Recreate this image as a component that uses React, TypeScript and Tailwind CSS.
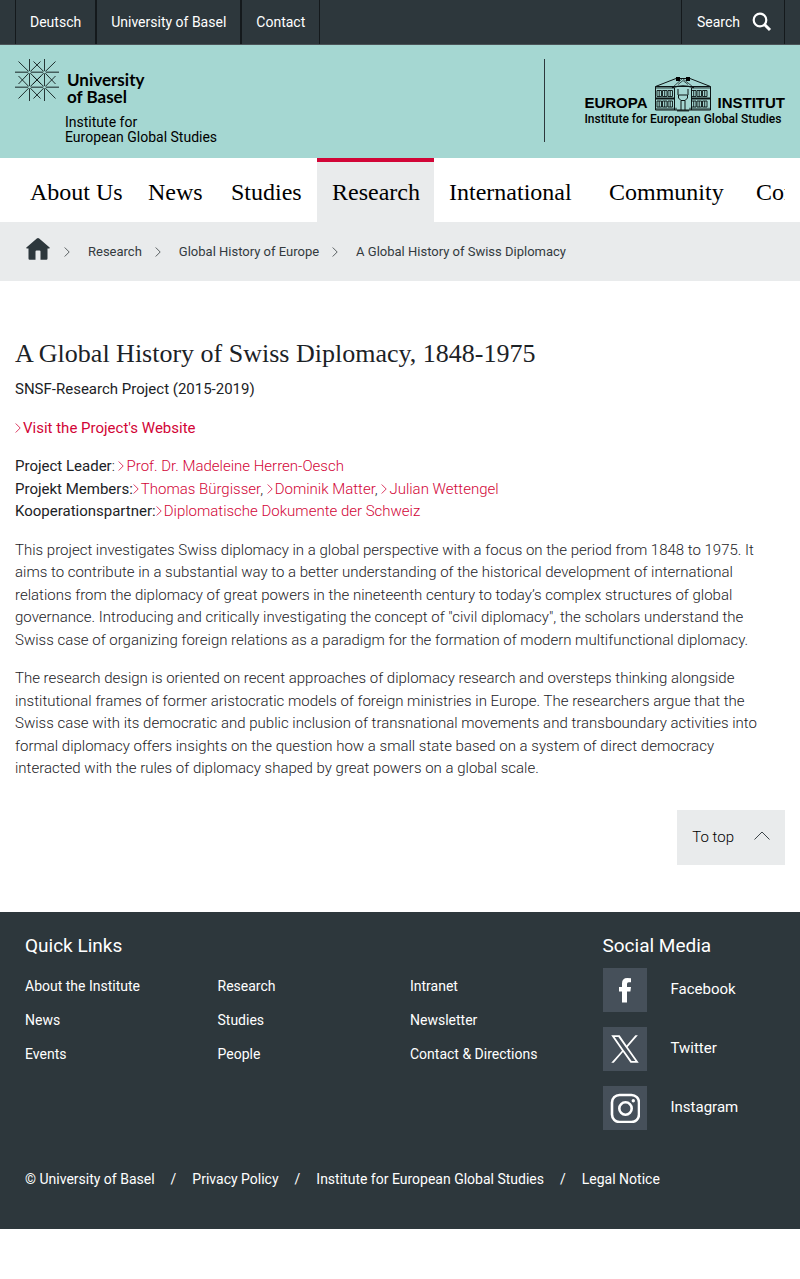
import React from 'react';

const sans = "font-['Roboto','Liberation_Sans',sans-serif]";
const serif = "font-['Liberation_Serif',serif]";

const navItems = ['About Us', 'News', 'Studies', 'Research', 'International', 'Community', 'Contact'];

const quickLinks = [
  ['About the Institute', 'News', 'Events'],
  ['Research', 'Studies', 'People'],
  ['Intranet', 'Newsletter', 'Contact & Directions'],
];

const legalLinks = ['© University of Basel', 'Privacy Policy', 'Institute for European Global Studies', 'Legal Notice'];

function Chevron({ className }: { className: string }) {
  return (
    <svg viewBox="0 0 6 10" className={className} fill="none" stroke="currentColor" aria-hidden="true">
      <path d="M.7.5 5.2 5 .7 9.5" strokeWidth="0.8" />
    </svg>
  );
}

function ContentLink({ children }: { children: string }) {
  return (
    <a href="#" className="text-[#d20537]">
      <Chevron className="mr-[2px] inline-block h-[10px] w-[6px] align-baseline" />
      {children}
    </a>
  );
}

function BaselMark() {
  return (
    <svg viewBox="0 0 44 43" className="h-[43px] w-11 shrink-0" fill="none" stroke="#101c1c" aria-hidden="true">
      <g strokeWidth="1" opacity="0.85">
        <path d="M14.5 0V42M29.5 0V42" />
        <path d="M0 13.3H44M0 28.3H44" strokeWidth="1.4" opacity="0.75" />
      </g>
      <g strokeWidth="0.9">
        <path d="M3.5 2.5 14.5 13.3 26 25M40.5 2.5 29.5 13.3 18 25M3.5 39.5 14.5 28.3 26 17M40.5 39.5 29.5 28.3 18 17" />
        <path d="M14.5 13.3 25.5 2.5M29.5 13.3 18.5 2.5M14.5 28.3 25.5 39.5M29.5 28.3 18.5 39.5" />
        <path d="M14.5 13.3 3.5 25M14.5 28.3 3.5 17M29.5 13.3 40.5 25M29.5 28.3 40.5 17" />
      </g>
      <g fill="#a5d7d2" stroke="none">
        <circle cx="14.5" cy="13.3" r="1.3" />
        <circle cx="29.5" cy="13.3" r="1.3" />
        <circle cx="14.5" cy="28.3" r="1.3" />
        <circle cx="29.5" cy="28.3" r="1.3" />
      </g>
    </svg>
  );
}

function Villa() {
  const windows = [2, 7.5, 13, 36.5, 42, 47.5];
  return (
    <svg viewBox="0 0 56 35" className="h-[35px] w-14 shrink-0" fill="none" stroke="#0c1515" strokeWidth="1" aria-hidden="true">
      <path d="M.5 9.5 21 1.5h14L55.5 9.5" />
      <rect x="21" y="0" width="4" height="4" fill="#000" stroke="none" />
      <rect x="31" y="0" width="4" height="4" fill="#000" stroke="none" />
      <path d="M18 10 27.5 1.5 38 10M23 7.5l5-4 5 4" strokeWidth="0.7" />
      <path d="M17 10.5q11-3 22 0" strokeWidth="1.4" />
      <path d="M.5 9.5h55v23.5h-55z" />
      <path d="M1 10.8h18M37 10.8h18" strokeWidth="2" opacity="0.5" />
      <path d="M1 21.5h18M37 21.5h18" strokeWidth="1.8" />
      <path d="M1 31.8h21M34 31.8h21" strokeWidth="2" opacity="0.5" />
      <g strokeWidth="0.9">
        {windows.map((x) => (
          <g key={x}>
            <path d={`M${x} 13.5h4.5v6h-4.5zM${x + 2.2} 13.5v6`} />
            <path d={`M${x} 24h4.5v6h-4.5zM${x + 2.2} 24v6`} />
          </g>
        ))}
      </g>
      <path d="M19.5 11v22M36.5 11v22M23 12v6M33 12v6" />
      <path d="M23.5 18h9v3l-2.5 2.5h-4L23.5 21zM26 23.5V33M30 23.5V33" fill="#a5d7d2" />
      <path d="M22 33.8h12" strokeWidth="1.2" />
    </svg>
  );
}

function SocialLink({ label, children }: { label: string; children: React.ReactNode }) {
  return (
    <li>
      <a href="#" className="flex items-center gap-6 text-[15px]">
        <span className="flex size-11 items-center justify-center bg-[#46505a]">{children}</span>
        {label}
      </a>
    </li>
  );
}

export default function App() {
  return (
    <div className={`${sans} bg-white text-[#1c2226]`}>
      <div className="border-b border-[#4b5458] bg-[#2d373c] px-[15px] text-sm text-white">
        <div className="flex h-11 justify-between">
          <nav aria-label="Service" className="flex border-l border-[#14191c]">
            {['Deutsch', 'University of Basel', 'Contact'].map((t, i) => (
              <a key={t} href="#" className={`flex items-center border-[#14191c] px-[14px] ${i < 2 ? 'border-r-2' : 'border-r'}`}>
                {t}
              </a>
            ))}
          </nav>
          <button className="flex items-center gap-3 border-x border-[#14191c] pr-3 pl-[15px]">
            Search
            <svg viewBox="0 0 20 20" className="size-5" fill="none" stroke="#fff" aria-hidden="true">
              <circle cx="8" cy="8" r="6.3" strokeWidth="2.2" />
              <path d="m12.5 12.5 5.5 5.5" strokeWidth="3" />
            </svg>
          </button>
        </div>
      </div>

      <header className="flex h-[113px] items-start justify-between bg-[#a5d7d2] px-[15px] pt-[14px] text-black">
        <a href="#" className="block">
          <span className="flex gap-2">
            <BaselMark />
            <span className="pt-3 font-['Lato',sans-serif] text-[17px] leading-[17px] font-bold">
              University
              <br />
              of Basel
            </span>
          </span>
          <span className="mt-[10px] block pl-[50px] text-sm leading-[15px]">
            Institute for
            <br />
            European Global Studies
          </span>
        </a>
        <a href="#" className="block border-l border-[#2d373c] pt-[18px] pb-[15px] pl-[39px]">
          <span className="flex items-end justify-between gap-[7px] font-['Liberation_Sans',sans-serif] text-[15px] leading-[18px] font-bold">
            EUROPA
            <Villa />
            INSTITUT
          </span>
          <span className="block text-xs leading-[15px] font-medium">Institute for European Global Studies</span>
        </a>
      </header>

      <nav aria-label="Main" className="px-[15px]">
        <ul className={`${serif} grid grid-cols-[118px_83px_101px_117px_160px_147px_auto] overflow-hidden text-2xl text-black`}>
          {navItems.map((t) => (
            <li key={t}>
              <a
                href="#"
                className={`flex h-16 items-center border-t-4 px-[15px] whitespace-nowrap ${
                  t === 'Research' ? 'border-[#d20537] bg-[#e9ebec]' : 'border-transparent'
                }`}
              >
                {t}
              </a>
            </li>
          ))}
        </ul>
      </nav>

      <nav aria-label="Breadcrumb" className="flex h-[59px] items-center bg-[#e9ebec] px-[26px] text-[13px] text-[#333a3e]">
        <a href="#" aria-label="Home" className="mr-[14px] pb-[6px]">
          <svg viewBox="0 0 24 22" className="h-[22px] w-6" fill="#2d373c" aria-hidden="true">
            <path d="M10.8.5q1.2-1 2.4 0L23.6 9.6q.6.9-.5.9H21.5V20.5q0 1.2-1.2 1.2H14.5V13.5q0-1-1-1h-3q-1 0-1 1V21.7H3.7q-1.2 0-1.2-1.2V10.5H.9q-1.1 0-.5-.9Z" />
          </svg>
        </a>
        {['Research', 'Global History of Europe', 'A Global History of Swiss Diplomacy'].map((t) => (
          <React.Fragment key={t}>
            <Chevron className="h-[10px] w-[6px]" />
            <a href="#" className="mr-[13px] ml-[18px]">
              {t}
            </a>
          </React.Fragment>
        ))}
      </nav>

      <main className="px-[15px] pt-[57px] pb-[47px]">
        <h1 className={`${serif} mb-2 text-[26px] leading-8`}>A Global History of Swiss Diplomacy, 1848-1975</h1>
        <div className="space-y-4 pr-[10px] text-[15px] leading-normal font-light">
          <p className="font-normal">SNSF-Research Project (2015-2019)</p>
          <p className="font-normal">
            <ContentLink>Visit the Project's Website</ContentLink>
          </p>
          <p>
            <span className="font-normal">Project Leader</span>: <ContentLink>Prof. Dr. Madeleine Herren-Oesch</ContentLink>
            <br />
            <span className="font-normal">Projekt Members:</span>
            <ContentLink>Thomas Bürgisser</ContentLink>, <ContentLink>Dominik Matter</ContentLink>,{' '}
            <ContentLink>Julian Wettengel</ContentLink>
            <br />
            <span className="font-normal">Kooperationspartner:</span>
            <ContentLink>Diplomatische Dokumente der Schweiz</ContentLink>
          </p>
          <p>
            This project investigates Swiss diplomacy in a global perspective with a focus on the period from 1848 to 1975. It
            aims to contribute in a substantial way to a better understanding of the historical development of international
            relations from the diplomacy of great powers in the nineteenth century to today’s complex structures of global
            governance. Introducing and critically investigating the concept of "civil diplomacy", the scholars understand the
            Swiss case of organizing foreign relations as a paradigm for the formation of modern multifunctional diplomacy.
          </p>
          <p>
            The research design is oriented on recent approaches of diplomacy research and oversteps thinking alongside
            institutional frames of former aristocratic models of foreign ministries in Europe. The researchers argue that the
            Swiss case with its democratic and public inclusion of transnational movements and transboundary activities into
            formal diplomacy offers insights on the question how a small state based on a system of direct democracy
            interacted with the rules of diplomacy shaped by great powers on a global scale.
          </p>
        </div>
        <div className="mt-[30px] flex justify-end">
          <a href="#" className="flex h-[55px] items-center gap-5 bg-[#e9ebec] px-[15px] text-[15px] font-light text-black">
            To top
            <svg viewBox="0 0 16 12" className="h-3 w-4" fill="none" stroke="#3c4448" aria-hidden="true">
              <path d="M.5 8.5 8 1l7.5 7.5" />
            </svg>
          </a>
        </div>
      </main>

      <footer className="bg-[#2d373c] px-[25px] pt-[22px] pb-10 text-sm text-white">
        <div className="-mr-5 grid grid-cols-4">
          <section className="col-span-3">
            <h2 className="text-[19px] leading-6">Quick Links</h2>
            <div className="mt-[18px] grid grid-cols-3">
              {quickLinks.map((col) => (
                <ul key={col[0]} className="space-y-[14px]">
                  {col.map((t) => (
                    <li key={t}>
                      <a href="#">{t}</a>
                    </li>
                  ))}
                </ul>
              ))}
            </div>
          </section>
          <section>
            <h2 className="text-[19px] leading-6">Social Media</h2>
            <ul className="mt-[10px] space-y-[15px]">
              <SocialLink label="Facebook">
                <svg viewBox="0 0 14 26" className="h-[26px] w-[14px]" fill="#fff" aria-hidden="true">
                  <path d="M4 25.5V14.5H1V10h3V6.5Q4 1 9.3 1 11.3 1 13 1.2V5.3H10.7Q9 5.3 9 7v3h4l-.6 4.5H9v11Z" />
                </svg>
              </SocialLink>
              <SocialLink label="Twitter">
                <svg viewBox="0 0 24 24" className="size-[30px]" fill="#fff" aria-hidden="true">
                  <path d="M14.1 10.3 22.3 1h-2l-7 8.1L7.7 1H1l8.6 12.3L1 23h2l7.4-8.6 6 8.6H23Zm-2.7 3-.9-1.2L3.7 2.4h3l5.5 7.8.9 1.2 7.2 10.2h-3Z" />
                </svg>
              </SocialLink>
              <SocialLink label="Instagram">
                <svg viewBox="0 0 30 30" className="size-[30px]" fill="none" stroke="#fff" aria-hidden="true">
                  <rect x="2" y="2" width="27" height="27" rx="7.5" strokeWidth="2.6" />
                  <circle cx="15.5" cy="15.5" r="6.2" strokeWidth="2.6" />
                  <circle cx="23.3" cy="7.7" r="1.7" fill="#fff" stroke="none" />
                </svg>
              </SocialLink>
            </ul>
          </section>
        </div>
        <div className="mt-[39px] flex flex-wrap gap-x-4">
          {legalLinks.map((t, i) => (
            <React.Fragment key={t}>
              {i > 0 && <span>/</span>}
              <a href="#">{t}</a>
            </React.Fragment>
          ))}
        </div>
      </footer>
    </div>
  );
}
